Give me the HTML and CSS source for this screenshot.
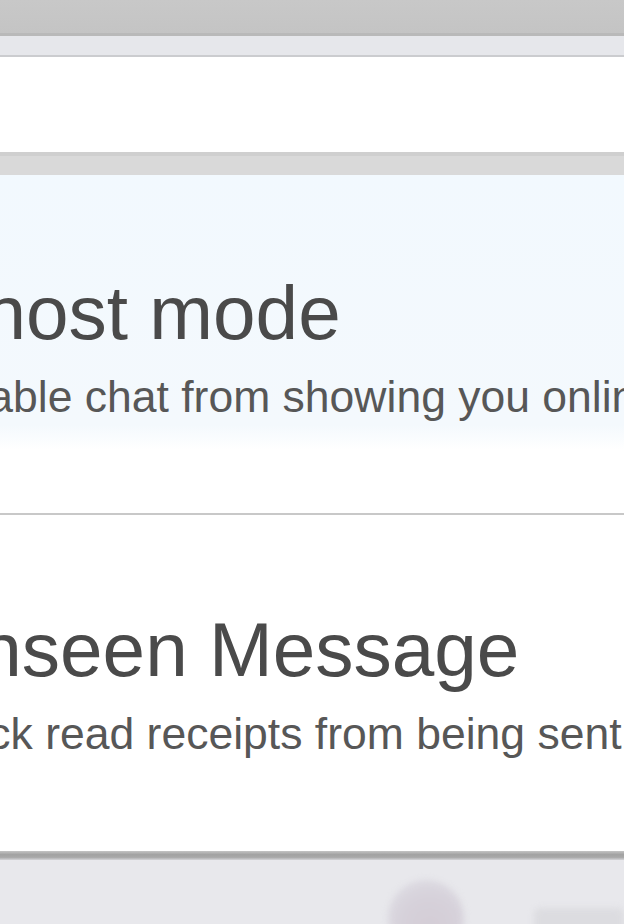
FILE: index.html
```html
<!DOCTYPE html>
<html lang="en">
<head>
<meta charset="utf-8">
<title>Settings</title>
<link rel="stylesheet" href="styles.css">
</head>
<body>
<div class="screen">
  <div class="topbar"></div>
  <div class="subbar"></div>
  <div class="search"></div>
  <div class="section-gap"></div>
  <div class="row row-active">
    <div class="row-text">
      <div class="row-title">Ghost mode</div>
      <div class="row-sub">Disable chat from showing you online</div>
    </div>
  </div>
  <div class="row row-plain">
    <div class="row-text">
      <div class="row-title">Unseen Message</div>
      <div class="row-sub">Block read receipts from being sent</div>
    </div>
  </div>
  <div class="footer-line"></div>
  <div class="footer">
    <div class="avatar"></div>
    <div class="footer-tab"></div>
  </div>
</div>
</body>
</html>
```

FILE: styles.css
```css
html, body {
  margin: 0;
  padding: 0;
  width: 624px;
  height: 924px;
  overflow: hidden;
  background: #ffffff;
}

.screen {
  width: 624px;
  height: 924px;
  display: flex;
  flex-direction: column;
  font-family: "Liberation Sans", Arial, sans-serif;
  overflow: hidden;
}

.topbar {
  height: 33px;
  flex: none;
  background: linear-gradient(#c8c8c8, #c4c4c4);
  border-bottom: 3px solid #b9b9b9;
}

.subbar {
  height: 19px;
  flex: none;
  background: #e6e7eb;
  border-bottom: 2px solid #cbcccf;
}

.search {
  height: 95px;
  flex: none;
  background: #ffffff;
}

.section-gap {
  height: 19px;
  flex: none;
  background: #d9d9d9;
  border-top: 4px solid #cfcfcf;
}

.row {
  flex: none;
  display: flex;
  flex-direction: column;
}

.row-active {
  height: 338px;
  background: linear-gradient(#f2f9fe 0px, #f4f9fd 250px, #ffffff 275px);
  border-bottom: 2px solid #c8c8c8;
}

.row-plain {
  height: 336px;
  background: #ffffff;
}

.row-text {
  margin-left: -76px;
  display: flex;
  flex-direction: column;
  gap: 25px;
  white-space: nowrap;
}

.row-active .row-text {
  padding-top: 100px;
}

.row-plain .row-text {
  padding-top: 97px;
}

.row-title {
  font-size: 76.5px;
  line-height: 75px;
  color: #4a4a4a;
}

.row-sub {
  font-size: 44.5px;
  line-height: 44px;
  color: #575757;
}

.footer-line {
  height: 9px;
  flex: none;
  background: linear-gradient(#c4c4c4, #a2a2a2 40%, #a8a8a8 70%, #d4d4d8);
}

.footer {
  flex: 1;
  background: #e8e8ec;
  display: flex;
  align-items: flex-start;
  padding-left: 388px;
  padding-top: 20px;
  gap: 70px;
}

.avatar {
  width: 76px;
  height: 76px;
  border-radius: 50%;
  background: radial-gradient(circle at 55% 60%, #d4cdd6 0%, #d6d1da 45%, #e0e0e6 100%);
  filter: blur(3px);
}

.footer-tab {
  margin-top: 28px;
  width: 90px;
  height: 30px;
  border-radius: 6px;
  background: #dcdce0;
  filter: blur(3px);
}
```
